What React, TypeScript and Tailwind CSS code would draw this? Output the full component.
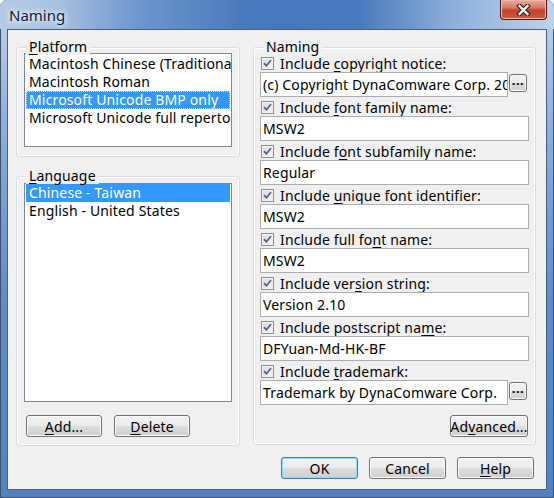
import React from "react";

const font = "font-['Noto_Sans','Open_Sans',sans-serif]";

function U({ children }: { children: React.ReactNode }) {
  return <span className="underline decoration-1 underline-offset-[2px]">{children}</span>;
}

function Check() {
  return (
    <span className="flex h-[13px] w-[13px] shrink-0 items-center justify-center border border-[#8e8f8f] bg-[linear-gradient(135deg,#d8d8d8,#f8f8f8)] shadow-[inset_0_0_0_1px_#f4f4f4]">
      <svg width="9" height="9" viewBox="0 0 9 9">
        <path d="M1 4.2 L3.4 6.8 L8 1.2" stroke="#4b5f8e" strokeWidth="1.7" fill="none" />
      </svg>
    </span>
  );
}

function Btn({
  children,
  className = "",
  def = false,
}: {
  children: React.ReactNode;
  className?: string;
  def?: boolean;
}) {
  return (
    <div
      className={`flex items-center justify-center rounded-[3px] border bg-[linear-gradient(#f2f2f2_0%,#ebebeb_48%,#dddddd_52%,#cfcfcf_100%)] text-black ${
        def
          ? "border-[#3c7fb1] shadow-[inset_0_0_0_1px_#97dbf8]"
          : "border-[#707070] shadow-[inset_0_0_0_1px_#fbfbfb]"
      } ${className}`}
    >
      {children}
    </div>
  );
}

function Field({ value, className = "" }: { value: string; className?: string }) {
  return (
    <div
      className={`h-[25px] overflow-hidden whitespace-nowrap border border-[#abadb3] bg-white pl-[2px] leading-[23px] ${className}`}
    >
      {value}
    </div>
  );
}

function Group({
  label,
  className = "",
  children,
}: {
  label: React.ReactNode;
  className?: string;
  children: React.ReactNode;
}) {
  return (
    <div
      className={`relative rounded-[3px] border border-[#d5dfe5] shadow-[inset_0_0_0_1px_#ffffff] ${className}`}
    >
      <span className="absolute -top-[10px] left-[9px] bg-[#f0f0f0] px-[3px] leading-[17px]">{label}</span>
      {children}
    </div>
  );
}

const rows: { label: React.ReactNode; value: string; more?: boolean }[] = [
  { label: <>Include <U>c</U>opyright notice:</>, value: "(c) Copyright DynaComware Corp. 2014", more: true },
  { label: <>Include <U>f</U>ont family name:</>, value: "MSW2" },
  { label: <>Include f<U>o</U>nt subfamily name:</>, value: "Regular" },
  { label: <>Include <U>u</U>nique font identifier:</>, value: "MSW2" },
  { label: <>Include full fo<U>n</U>t name:</>, value: "MSW2" },
  { label: <>Include ver<U>s</U>ion string:</>, value: "Version 2.10" },
  { label: <>Include postscript na<U>m</U>e:</>, value: "DFYuan-Md-HK-BF" },
  { label: <>Include <U>t</U>rademark:</>, value: "Trademark by DynaComware Corp.", more: true },
];

export default function App() {
  return (
    <div
      className={`${font} flex h-[498px] w-[554px] flex-col overflow-hidden rounded-t-[7px] bg-[linear-gradient(#c4d5ec,#8eaedb_25%,#5f8cc8_60%,#5281c2)] text-[14px] tracking-[0.15px] text-black shadow-[inset_0_0_0_1px_#3b5270]`}
    >
      {/* title bar */}
      <div className="flex h-[29px] shrink-0 bg-[linear-gradient(to_right,#b7cbe7_0%,#a9c1e2_10%,#6d97cd_25%,#4877bb_45%,#4a7abd_65%,#8fb0dc_82%,#bfd2ea_100%)] pl-[9px] pr-[7px]">
        <span className="self-center pt-[1px] text-[15px] tracking-normal text-[#0b1b33] [text-shadow:0_0_8px_#fff,0_0_4px_#fff]">
          Naming
        </span>
        <div className="ml-auto flex h-[20px] w-[47px] items-center justify-center rounded-b-[4px] border border-t-0 border-[#4a1a14] bg-[linear-gradient(#e8ab9e,#d77a68_40%,#c2412b_55%,#cf5a42)] shadow-[inset_0_0_0_1px_#f0b7aa]">
          <svg width="15" height="12" viewBox="0 0 15 12">
            <path d="M3.5 2 L11.5 10 M11.5 2 L3.5 10" stroke="#3b2320" strokeWidth="4.6" strokeLinecap="square" />
            <path d="M3.5 2 L11.5 10 M11.5 2 L3.5 10" stroke="#ffffff" strokeWidth="2.4" strokeLinecap="square" />
          </svg>
        </div>
      </div>

      {/* client area */}
      <div className="mx-[7px] flex h-[461px] flex-col border border-[#46607f] bg-[#f0f0f0]">
        <div className="flex gap-[13px] pl-[8px] pt-[17px]">
          {/* left column */}
          <div className="flex w-[224px] flex-col gap-[19px]">
            <Group label={<><U>P</U>latform</>} className="h-[110px] pl-[7px] pt-[5px]">
              <div className="h-[94px] w-[208px] overflow-hidden border border-[#828790] bg-white px-[1px] pt-[1px] leading-[18px]">
                {[
                  "Macintosh Chinese (Traditional)",
                  "Macintosh Roman",
                  "Microsoft Unicode BMP only",
                  "Microsoft Unicode full repertoire",
                ].map((t, i) => (
                  <div
                    key={t}
                    className={`h-[18px] whitespace-nowrap pl-[3px] ${
                      i === 2 ? "bg-[#3399ff] text-white outline-1 -outline-offset-1 outline-dotted outline-[#c8e0ff]" : ""
                    }`}
                  >
                    {t}
                  </div>
                ))}
              </div>
            </Group>
            <Group label={<><U>L</U>anguage</>} className="h-[270px] pl-[7px] pt-[6px]">
              <div className="h-[219px] w-[208px] overflow-hidden border border-[#828790] bg-white px-[1px] leading-[18px]">
                <div className="h-[18px] bg-[#3399ff] pl-[3px] text-white">Chinese - Taiwan</div>
                <div className="h-[18px] pl-[3px]">English - United States</div>
              </div>
              <div className="mt-[13px] flex gap-[12px] pl-[2px]">
                <Btn className="h-[22px] w-[76px]"><U>A</U>dd...</Btn>
                <Btn className="h-[22px] w-[76px]"><U>D</U>elete</Btn>
              </div>
            </Group>
          </div>

          {/* right column */}
          <Group label="Naming" className="flex h-[398px] w-[283px] flex-col pl-[6px] pr-[6px] pt-[7px]">
            {rows.map((r, i) => (
              <div key={i} className="mb-[2px] flex flex-col">
                <div className="flex h-[17px] items-center gap-[6px] pl-[1px] leading-[17px]">
                  <Check />
                  <span className="whitespace-nowrap">{r.label}</span>
                </div>
                {r.more ? (
                  <div className="flex items-start gap-[1px]">
                    <Field value={r.value} className="w-[248px]" />
                    <Btn className="mt-[2px] h-[18px] w-[18px] pb-[6px] text-[13px] font-bold leading-none tracking-[0.5px] text-[#1c3a6e]">...</Btn>
                  </div>
                ) : (
                  <Field value={r.value} />
                )}
              </div>
            ))}
            <div className="mt-[8px] flex justify-end pr-[1px]">
              <Btn className="h-[22px] w-[78px]">
                Ad<U>v</U>anced...
              </Btn>
            </div>
          </Group>
        </div>

        {/* dialog buttons */}
        <div className="mt-[11px] flex justify-end gap-[11px] pr-[12px]">
          <Btn def className="h-[22px] w-[77px]">OK</Btn>
          <Btn className="h-[22px] w-[77px]">Cancel</Btn>
          <Btn className="h-[22px] w-[77px]"><U>H</U>elp</Btn>
        </div>
      </div>
    </div>
  );
}
